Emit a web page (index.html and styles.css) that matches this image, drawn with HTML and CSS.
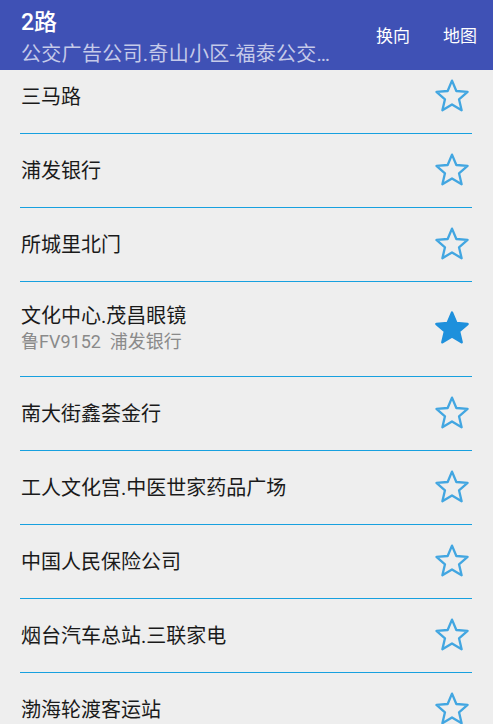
FILE: index.html
```html
<!DOCTYPE html>
<html lang="zh-CN">
<head>
<meta charset="utf-8">
<title>2路</title>
<link rel="stylesheet" href="styles.css">
</head>
<body>
<div class="app">
  <header class="toolbar">
    <div class="titles">
      <div class="title">2路</div>
      <div class="subtitle">公交广告公司.奇山小区-福泰公交场站</div>
    </div>
    <div class="actions">
      <span class="action">换向</span>
      <span class="action">地图</span>
    </div>
  </header>
  <main class="list">
    <div class="row first"><div class="name">三马路</div><svg class="star" viewBox="-18 -18 36 36"><path class="outline" d="M0,-15.5 L4.11,-5.66 L14.74,-4.79 L6.66,2.16 L9.11,12.54 L0,7 L-9.11,12.54 L-6.66,2.16 L-14.74,-4.79 L-4.11,-5.66 Z"/></svg></div>
    <div class="row"><div class="name">浦发银行</div><svg class="star" viewBox="-18 -18 36 36"><path class="outline" d="M0,-15.5 L4.11,-5.66 L14.74,-4.79 L6.66,2.16 L9.11,12.54 L0,7 L-9.11,12.54 L-6.66,2.16 L-14.74,-4.79 L-4.11,-5.66 Z"/></svg></div>
    <div class="row"><div class="name">所城里北门</div><svg class="star" viewBox="-18 -18 36 36"><path class="outline" d="M0,-15.5 L4.11,-5.66 L14.74,-4.79 L6.66,2.16 L9.11,12.54 L0,7 L-9.11,12.54 L-6.66,2.16 L-14.74,-4.79 L-4.11,-5.66 Z"/></svg></div>
    <div class="row tall"><div class="info"><div class="name">文化中心.茂昌眼镜</div><div class="bus">鲁FV9152&nbsp;&nbsp;浦发银行</div></div><svg class="star" viewBox="-18 -18 36 36"><path class="filled" d="M0,-15.5 L4.11,-5.66 L14.74,-4.79 L6.66,2.16 L9.11,12.54 L0,7 L-9.11,12.54 L-6.66,2.16 L-14.74,-4.79 L-4.11,-5.66 Z"/></svg></div>
    <div class="row"><div class="name">南大街鑫荟金行</div><svg class="star" viewBox="-18 -18 36 36"><path class="outline" d="M0,-15.5 L4.11,-5.66 L14.74,-4.79 L6.66,2.16 L9.11,12.54 L0,7 L-9.11,12.54 L-6.66,2.16 L-14.74,-4.79 L-4.11,-5.66 Z"/></svg></div>
    <div class="row"><div class="name">工人文化宫.中医世家药品广场</div><svg class="star" viewBox="-18 -18 36 36"><path class="outline" d="M0,-15.5 L4.11,-5.66 L14.74,-4.79 L6.66,2.16 L9.11,12.54 L0,7 L-9.11,12.54 L-6.66,2.16 L-14.74,-4.79 L-4.11,-5.66 Z"/></svg></div>
    <div class="row"><div class="name">中国人民保险公司</div><svg class="star" viewBox="-18 -18 36 36"><path class="outline" d="M0,-15.5 L4.11,-5.66 L14.74,-4.79 L6.66,2.16 L9.11,12.54 L0,7 L-9.11,12.54 L-6.66,2.16 L-14.74,-4.79 L-4.11,-5.66 Z"/></svg></div>
    <div class="row"><div class="name">烟台汽车总站.三联家电</div><svg class="star" viewBox="-18 -18 36 36"><path class="outline" d="M0,-15.5 L4.11,-5.66 L14.74,-4.79 L6.66,2.16 L9.11,12.54 L0,7 L-9.11,12.54 L-6.66,2.16 L-14.74,-4.79 L-4.11,-5.66 Z"/></svg></div>
    <div class="row"><div class="name">渤海轮渡客运站</div><svg class="star" viewBox="-18 -18 36 36"><path class="outline" d="M0,-15.5 L4.11,-5.66 L14.74,-4.79 L6.66,2.16 L9.11,12.54 L0,7 L-9.11,12.54 L-6.66,2.16 L-14.74,-4.79 L-4.11,-5.66 Z"/></svg></div>
  </main>
</div>
</body>
</html>
```

FILE: styles.css
```css
html, body {
  margin: 0;
  padding: 0;
}
body {
  width: 493px;
  height: 724px;
  overflow: hidden;
  background: #eeeeee;
  font-family: Roboto, "Noto Sans CJK SC", sans-serif;
}
.app {
  display: flex;
  flex-direction: column;
  height: 724px;
}
.toolbar {
  flex: none;
  height: 70px;
  background: #3f51b5;
  color: #ffffff;
  display: flex;
  align-items: center;
  padding-left: 21px;
  box-sizing: border-box;
  position: relative;
  z-index: 1;
}
.titles {
  flex: 1;
  min-width: 0;
  display: flex;
  flex-direction: column;
  gap: 4px;
  margin-top: 6px;
}
.title {
  font-size: 23px;
  font-weight: 500;
  line-height: 28px;
}
.subtitle {
  font-size: 20px;
  line-height: 26px;
  color: #c5cae9;
  white-space: nowrap;
  overflow: hidden;
  text-overflow: ellipsis;
  width: 315px;
  letter-spacing: 0.3px;
}
.actions {
  display: flex;
  gap: 33px;
  padding-right: 16px;
  margin-top: 2px;
}
.action {
  font-size: 17px;
  line-height: 22px;
}
.list {
  flex: 1;
  overflow: hidden;
}
.row {
  display: flex;
  align-items: center;
  height: 73px;
  margin: 0 21px 0 20px;
  padding-left: 1px;
  padding-right: 1px;
  border-bottom: 1px solid #17a0df;
}
.row.first {
  margin-top: -10px;
}
.row.tall {
  height: 94px;
}
.name {
  flex: 1;
  font-size: 20px;
  line-height: 26px;
  color: #1a1a1a;
}
.info {
  flex: 1;
  display: flex;
  flex-direction: column;
}
.info .name {
  flex: none;
}
.bus {
  font-size: 18px;
  line-height: 26px;
  color: #8a8a8a;
}
.star {
  width: 38px;
  height: 38px;
  flex: none;
}
.outline {
  fill: none;
  stroke: #42a6e1;
  stroke-width: 2.2;
  stroke-linejoin: round;
}
.filled {
  fill: #1e90dc;
  stroke: #1e90dc;
  stroke-width: 2.4;
  stroke-linejoin: round;
}
```
